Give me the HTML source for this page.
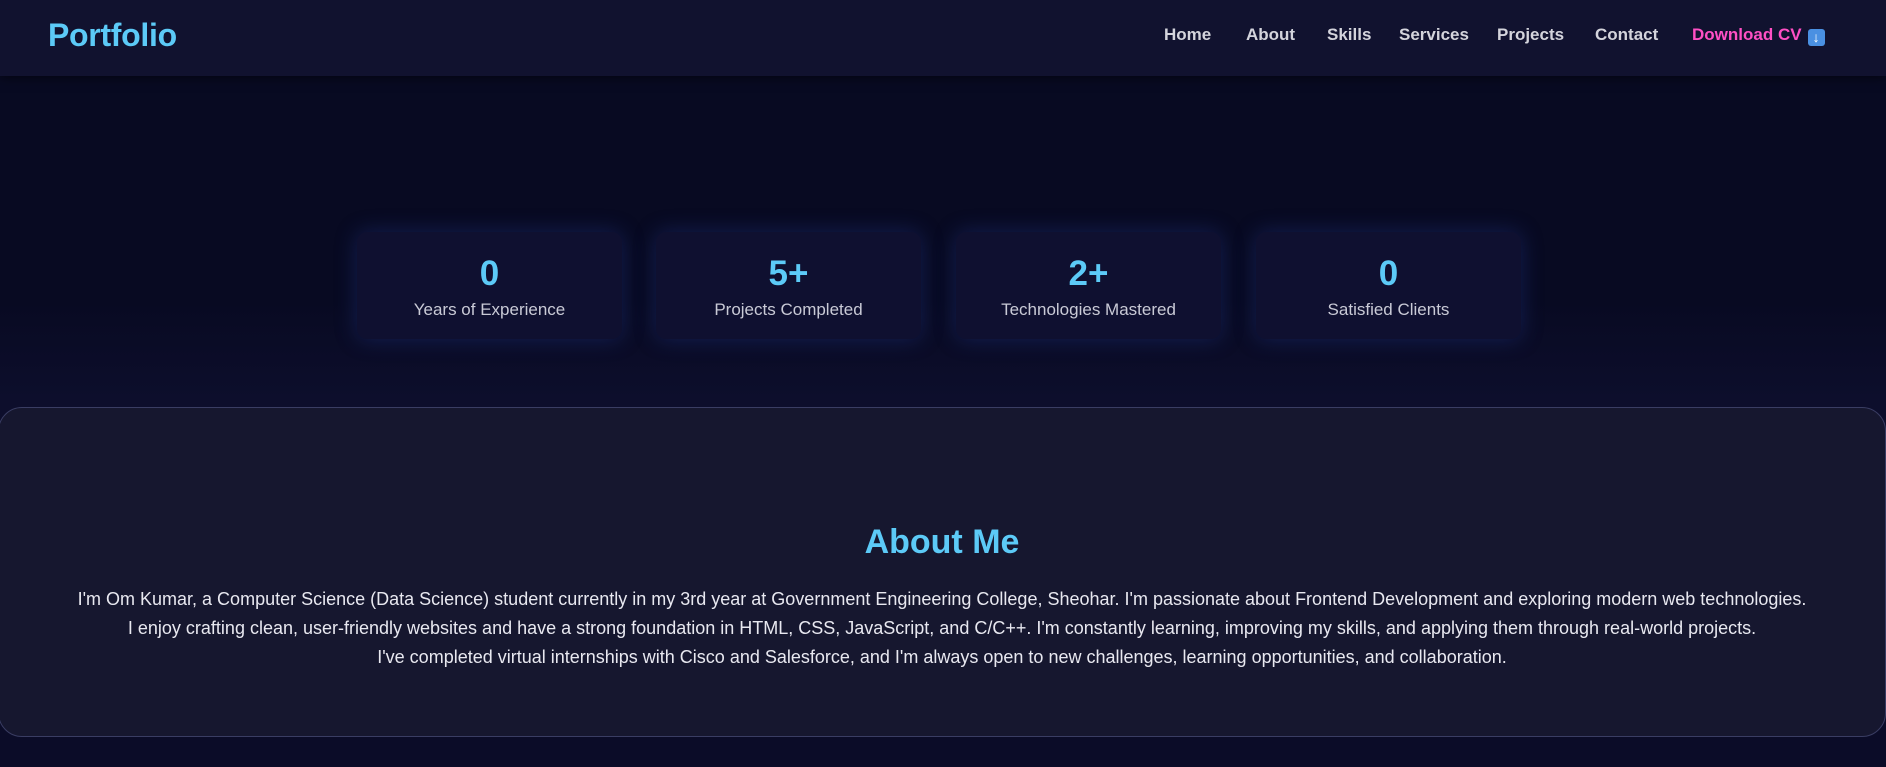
<!DOCTYPE html>
<html><head><meta charset="utf-8"><style>
*{margin:0;padding:0;box-sizing:border-box}
body{width:1886px;height:767px;overflow:hidden;background:linear-gradient(#080a22 0,#080a22 300px,#0d0e2c 400px,#0b0c28 767px);font-family:"Liberation Sans",sans-serif;position:relative}
nav{position:absolute;left:0;top:0;width:1886px;height:76px;background:#11122f;box-shadow:0 2px 10px rgba(0,0,0,.5)}
.logo{position:absolute;left:48px;top:17px;font-size:32px;font-weight:bold;color:#5ccaf7;letter-spacing:-0.3px}
.nl{position:absolute;top:25px;font-size:17px;font-weight:bold;color:#d4d4dc;white-space:nowrap}
.dl{color:#ff4fc4}
.ic{display:inline-block;width:17px;height:17px;background:#4a90e2;border-radius:3px;vertical-align:-2px;margin-left:6px;position:relative;color:#fff;font-size:14px;text-align:center;line-height:17px}
.card{position:absolute;top:232px;width:265px;height:107px;background:#0f1030;border-radius:10px;box-shadow:0 0 22px rgba(40,70,170,.35);text-align:center}
.card b{display:block;margin-top:22px;font-size:35px;color:#5ccaf7;line-height:40px}
.card span{display:block;margin-top:6px;font-size:17px;color:#c9cad6}
.about{position:absolute;left:-2px;top:407px;width:1888px;height:330px;background:#16172f;border:1px solid #3a3d63;border-radius:24px;text-align:center}
.about h2{margin-top:114px;font-size:34px;color:#5ccaf7;line-height:40px}
.about p{margin-top:23px;font-size:18px;line-height:29px;color:#e8e8f0}
</style></head><body>
<nav>
<div class="logo">Portfolio</div>
<div class="nl" style="left:1164px">Home</div>
<div class="nl" style="left:1246px">About</div>
<div class="nl" style="left:1327px">Skills</div>
<div class="nl" style="left:1399px">Services</div>
<div class="nl" style="left:1497px">Projects</div>
<div class="nl" style="left:1595px">Contact</div>
<div class="nl dl" style="left:1692px">Download CV<span class="ic">↓</span></div>
</nav>
<div class="card" style="left:357px"><b>0</b><span>Years of Experience</span></div>
<div class="card" style="left:656px"><b>5+</b><span>Projects Completed</span></div>
<div class="card" style="left:956px"><b>2+</b><span>Technologies Mastered</span></div>
<div class="card" style="left:1256px"><b>0</b><span>Satisfied Clients</span></div>
<div class="about">
<h2>About Me</h2>
<p>I'm Om Kumar, a Computer Science (Data Science) student currently in my 3rd year at Government Engineering College, Sheohar. I'm passionate about Frontend Development and exploring modern web technologies.<br>I enjoy crafting clean, user-friendly websites and have a strong foundation in HTML, CSS, JavaScript, and C/C++. I'm constantly learning, improving my skills, and applying them through real-world projects.<br>I've completed virtual internships with Cisco and Salesforce, and I'm always open to new challenges, learning opportunities, and collaboration.</p>
</div>
</body></html>
